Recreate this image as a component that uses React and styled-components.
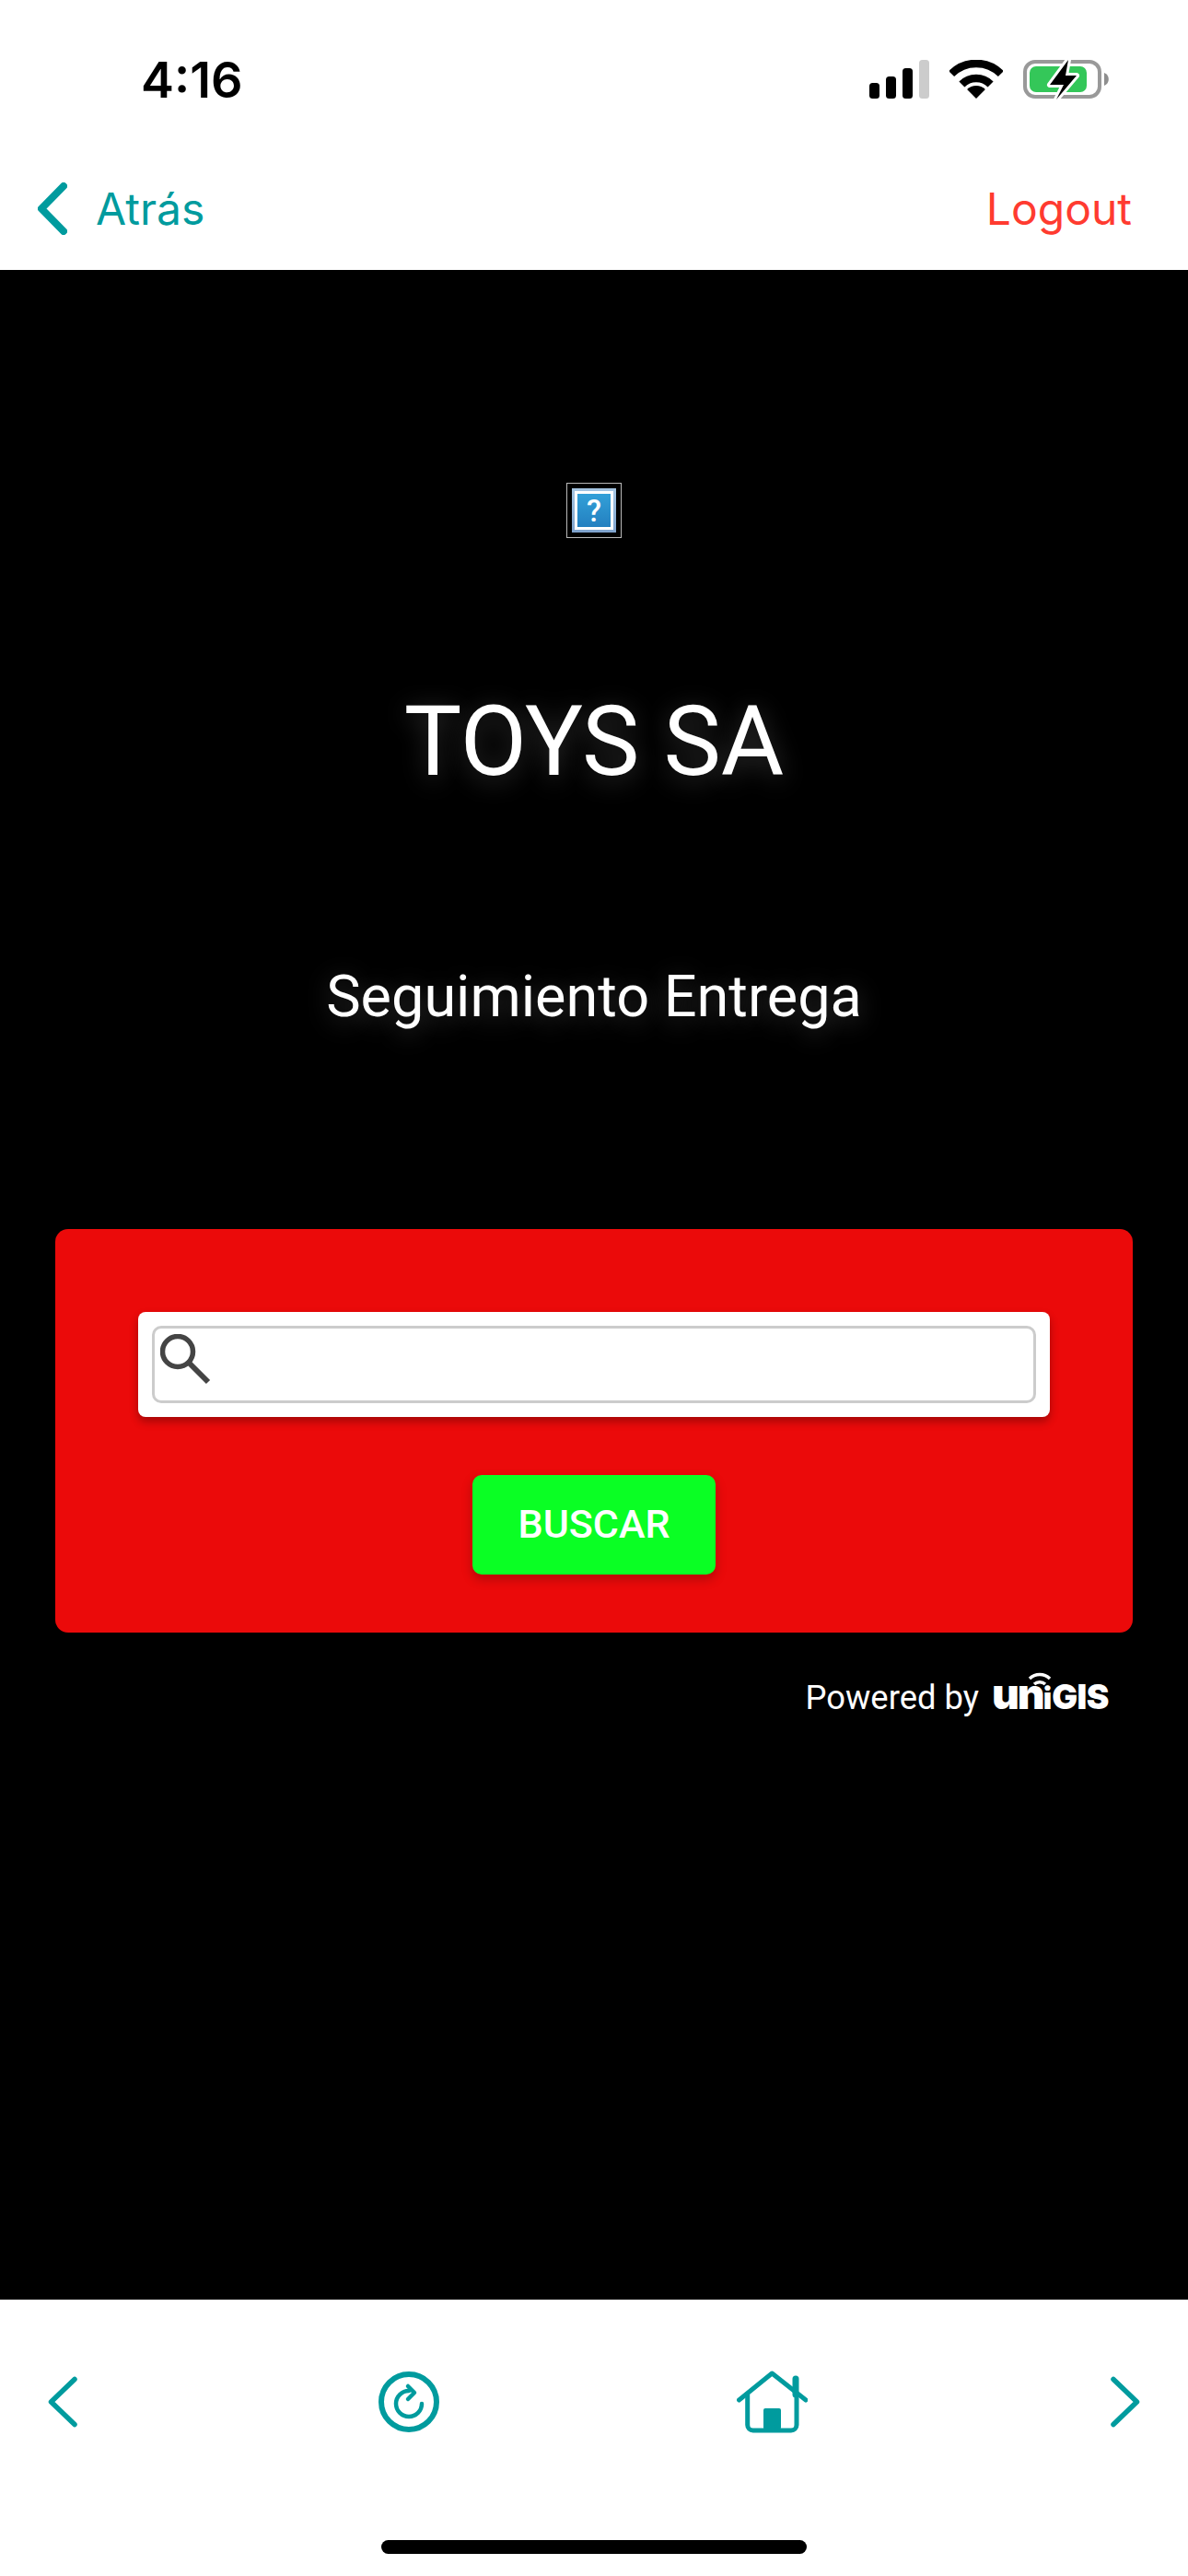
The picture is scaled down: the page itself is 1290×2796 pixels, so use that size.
import React from 'react';
import styled, { createGlobalStyle } from 'styled-components';

const GlobalStyle = createGlobalStyle`
  html, body {
    margin: 0;
    padding: 0;
    background: #fff;
  }
  * {
    box-sizing: border-box;
  }
`;

const Page = styled.div`
  display: flex;
  flex-direction: column;
  width: 1290px;
  height: 2796px;
  overflow: hidden;
  font-family: Roboto, "Liberation Sans", sans-serif;
`;

const StatusBar = styled.div`
  display: flex;
  justify-content: space-between;
  align-items: flex-start;
  height: 170px;
  padding: 65px 86px 0 153px;
  background: #fff;
`;

const Time = styled.span`
  font-family: Inter, "Liberation Sans", sans-serif;
  font-size: 54px;
  font-weight: 600;
  line-height: 44px;
  color: #000;
`;

const StatusIcons = styled.div`
  display: flex;
  align-items: flex-start;
  gap: 22px;
`;

const NavBar = styled.div`
  display: flex;
  justify-content: space-between;
  align-items: center;
  height: 123px;
  padding: 0 61px 10px 41px;
  background: #fff;
  font-family: Inter, "Liberation Sans", sans-serif;
  font-size: 48px;
`;

const BackLink = styled.a`
  display: flex;
  align-items: center;
  gap: 31px;
  color: #009b9e;
`;

const Logout = styled.a`
  color: #ff3b30;
`;

const Main = styled.main`
  flex: 1;
  display: flex;
  flex-direction: column;
  align-items: center;
  padding-top: 231px;
  background: #000;
`;

const ImageFrame = styled.div`
  display: flex;
  justify-content: center;
  align-items: center;
  width: 60px;
  height: 60px;
  border: 1px solid #b9b9b9;
`;

const ImageTile = styled.div`
  width: 48px;
  height: 48px;
  padding: 3px;
  background: linear-gradient(#a5c5e2, #7fa3cd);
`;

const ImageMark = styled.div`
  display: flex;
  justify-content: center;
  align-items: center;
  width: 100%;
  height: 100%;
  border: 3px solid #fff;
  background: linear-gradient(#33a0d8, #2380c0);
  color: #fff;
  font-size: 33px;
  font-weight: 500;
  line-height: 1;
`;

const Title = styled.h1`
  margin: 162px 0 0;
  font-size: 105px;
  font-weight: 400;
  line-height: 120px;
  color: #fff;
  text-shadow: 0 5px 28px rgba(255, 255, 255, 0.22);
`;

const Subtitle = styled.h2`
  margin: 176px 0 0;
  font-size: 63px;
  font-weight: 400;
  line-height: 80px;
  color: #fff;
  text-shadow: 0 5px 28px rgba(255, 255, 255, 0.22);
`;

const Card = styled.section`
  display: flex;
  flex-direction: column;
  align-items: center;
  gap: 63px;
  width: 1170px;
  margin-top: 212px;
  padding: 90px 90px 63px;
  border-radius: 14px;
  background: #eb0a0a;
`;

const SearchBox = styled.div`
  width: 100%;
  padding: 15px;
  border-radius: 8px;
  background: #fff;
  box-shadow: 0 5px 10px rgba(0, 0, 0, 0.3);
`;

const SearchField = styled.div`
  position: relative;
  height: 84px;
`;

const SearchIcon = styled.svg`
  position: absolute;
  top: 9px;
  left: 9px;
`;

const SearchInput = styled.input`
  display: block;
  width: 100%;
  height: 100%;
  border: 3px solid #ccc;
  border-radius: 10px;
  background: #fff;
  outline: none;
`;

const SearchButton = styled.button`
  width: 264px;
  height: 108px;
  padding: 0 0 3px;
  border: none;
  border-radius: 10px;
  background: #0aff24;
  box-shadow: 0 5px 12px rgba(0, 0, 0, 0.25);
  color: #fff;
  font-family: Roboto, "Liberation Sans", sans-serif;
  font-size: 43px;
  font-weight: 500;
`;

const Powered = styled.div`
  display: flex;
  justify-content: flex-end;
  align-items: baseline;
  gap: 14px;
  width: 100%;
  margin-top: 41px;
  padding-right: 86px;
  color: #fff;
  font-size: 36.4px;
  line-height: 50px;
`;

const Logo = styled.span`
  position: relative;
  display: inline-flex;
  align-items: baseline;
  font-family: Inter, "Liberation Sans", sans-serif;
  font-weight: 900;
`;

const LogoPart = styled.span`
  font-size: ${(p) => p.$size}px;
  letter-spacing: ${(p) => p.$tracking}px;
`;

const LogoWaves = styled.svg`
  position: absolute;
  top: 0;
  left: 39px;
`;

const BottomBar = styled.footer`
  display: flex;
  flex-direction: column;
  height: 300px;
  padding-top: 77px;
  background: #fff;
`;

const BottomIcons = styled.div`
  display: grid;
  grid-template-columns: 359px 389px 406px 32px;
  align-items: center;
  padding-left: 52px;
`;

const HomeIndicator = styled.div`
  align-self: center;
  width: 462px;
  height: 15px;
  margin-top: auto;
  margin-bottom: 24px;
  border-radius: 8px;
  background: #000;
`;

const TEAL = '#009b9e';

const SignalIcon = () => (
  <svg width="65" height="42" viewBox="0 0 65 42">
    <rect x="0" y="25" width="11" height="17" rx="3.5" fill="#000" />
    <rect x="18" y="18" width="11" height="24" rx="3.5" fill="#000" />
    <rect x="36" y="9" width="11" height="33" rx="3.5" fill="#000" />
    <rect x="54" y="0" width="11" height="42" rx="3.5" fill="#ccc" />
  </svg>
);

const WifiIcon = () => (
  <svg width="58" height="42" viewBox="0 0 58 42">
    <path d="M2.1 15.1A38 38 0 0 1 55.9 15.1" fill="none" stroke="#000" strokeWidth="8.5" />
    <path d="M13.4 26.4A22 22 0 0 1 44.6 26.4" fill="none" stroke="#000" strokeWidth="8.5" />
    <path d="M29 42L19.1 32.1A14 14 0 0 1 38.9 32.1Z" fill="#000" />
  </svg>
);

const BatteryIcon = () => (
  <svg width="93" height="43" viewBox="0 0 93 43">
    <rect x="2" y="2" width="81" height="38" rx="11" fill="none" stroke="#999" strokeWidth="4" />
    <rect x="7" y="7" width="62" height="28" rx="7" fill="#34c759" />
    <path d="M88 14a7.5 7.5 0 0 1 0 14Z" fill="#8e8e8e" />
    <path
      d="M49 0L29 27H44L36 43L58 17H46Z"
      fill="#000"
      stroke="#fff"
      strokeWidth="6"
      strokeLinejoin="round"
      paintOrder="stroke"
    />
  </svg>
);

const NavChevron = () => (
  <svg width="32" height="57" viewBox="0 0 32 57">
    <path d="M28 4L4 28.5L28 53" fill="none" stroke={TEAL} strokeWidth="8" strokeLinecap="round" strokeLinejoin="round" />
  </svg>
);

const FooterChevron = ({ flip }) => (
  <svg width="32" height="56" viewBox="0 0 32 56" style={flip ? { transform: 'scaleX(-1)' } : undefined}>
    <path d="M29 3.5L3.5 28L29 52.5" fill="none" stroke={TEAL} strokeWidth="5.5" strokeLinecap="round" strokeLinejoin="round" />
  </svg>
);

const ReloadIcon = () => (
  <svg width="66" height="66" viewBox="0 0 66 66" fill="none" stroke={TEAL}>
    <circle cx="33" cy="33" r="30" strokeWidth="6" />
    <path d="M47 35A14 14 0 1 1 33 21" strokeWidth="4.5" strokeLinecap="round" />
    <path d="M32 16L39 23L32 30" strokeWidth="4.5" strokeLinecap="round" strokeLinejoin="round" />
  </svg>
);

const HomeIcon = () => (
  <svg width="77" height="68" viewBox="0 0 77 68" fill="none" stroke={TEAL}>
    <path d="M2.5 32L38.3 3L75 32" strokeWidth="5" strokeLinecap="round" strokeLinejoin="round" />
    <path d="M11.7 26V59a6 6 0 0 0 6 6H59a6 6 0 0 0 6-6V26" strokeWidth="5" />
    <path d="M64 9V26" strokeWidth="7" strokeLinecap="round" />
    <rect x="29" y="41" width="19" height="23" rx="2" fill={TEAL} stroke="none" />
  </svg>
);

export default function App() {
  return (
    <Page>
      <GlobalStyle />
      <StatusBar>
        <Time>4:16</Time>
        <StatusIcons>
          <SignalIcon />
          <WifiIcon />
          <BatteryIcon />
        </StatusIcons>
      </StatusBar>
      <NavBar>
        <BackLink>
          <NavChevron />
          Atrás
        </BackLink>
        <Logout>Logout</Logout>
      </NavBar>
      <Main>
        <ImageFrame>
          <ImageTile>
            <ImageMark>?</ImageMark>
          </ImageTile>
        </ImageFrame>
        <Title>TOYS SA</Title>
        <Subtitle>Seguimiento Entrega</Subtitle>
        <Card>
          <SearchBox>
            <SearchField>
              <SearchInput type="text" />
              <SearchIcon width="56" height="56" viewBox="0 0 56 56" fill="none" stroke="#444">
                <circle cx="19" cy="19" r="16.5" strokeWidth="5.5" />
                <path d="M31 31L52 52" strokeWidth="6" />
              </SearchIcon>
            </SearchField>
          </SearchBox>
          <SearchButton>BUSCAR</SearchButton>
        </Card>
        <Powered>
          Powered by
          <Logo>
            <LogoPart $size={46} $tracking={-2}>un</LogoPart>
            <LogoPart $size={32} $tracking={0}>i</LogoPart>
            <LogoPart $size={37} $tracking={-0.5}>GIS</LogoPart>
            <LogoWaves width="26" height="18" viewBox="0 0 26 18" fill="none" stroke="#fff" strokeWidth="3.5">
              <path d="M2 9A16 16 0 0 1 24 9" />
              <path d="M7 15A9 9 0 0 1 19 15" />
            </LogoWaves>
          </Logo>
        </Powered>
      </Main>
      <BottomBar>
        <BottomIcons>
          <FooterChevron />
          <ReloadIcon />
          <HomeIcon />
          <FooterChevron flip />
        </BottomIcons>
        <HomeIndicator />
      </BottomBar>
    </Page>
  );
}
